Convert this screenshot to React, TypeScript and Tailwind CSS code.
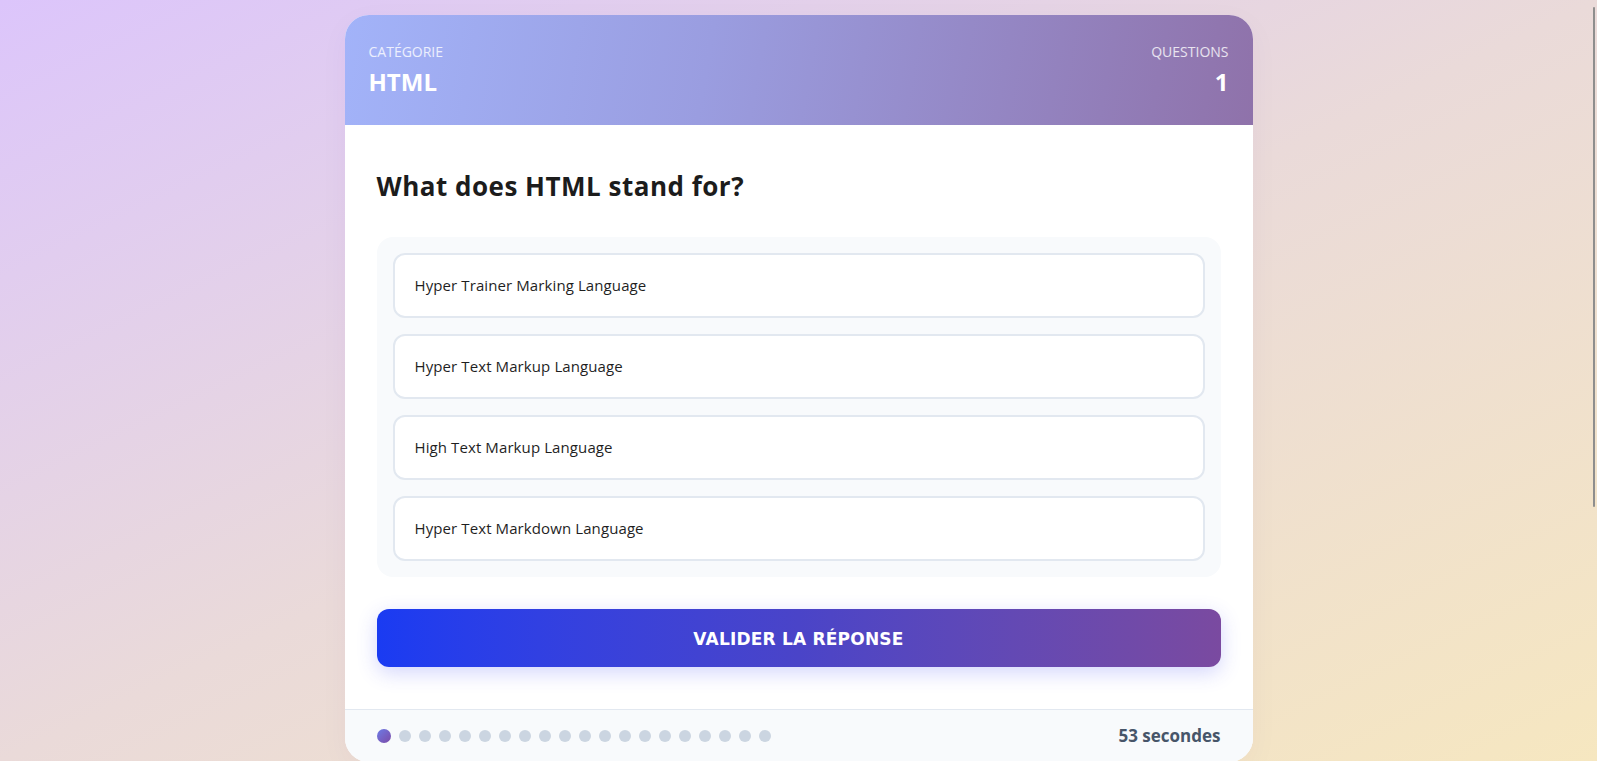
const options = [
  "Hyper Trainer Marking Language",
  "Hyper Text Markup Language",
  "High Text Markup Language",
  "Hyper Text Markdown Language",
];

const TOTAL = 20;

export default function App() {
  return (
    <div
      className="relative h-[761px] overflow-hidden bg-gradient-to-br from-[#dcc5fb] via-[#eadad9] to-[#f6e7c0] pt-[15px]"
      style={{ fontFamily: '"Open Sans", "Noto Sans", sans-serif' }}
    >
      <div className="mx-auto w-[908px] overflow-hidden rounded-3xl bg-white shadow-[0_8px_30px_rgba(80,60,120,0.04)]">
        {/* Header */}
        <div className="flex h-[110px] items-start justify-between bg-[linear-gradient(100deg,#a2b3f9_0%,#9a9de0_40%,#8f72aa_100%)] px-6 pt-[27px]">
          <div>
            <div className="text-[14px] leading-5 uppercase text-white/80">Catégorie</div>
            <div className="mt-1 text-2xl leading-8 font-bold text-white">HTML</div>
          </div>
          <div className="text-right">
            <div className="text-[14px] leading-5 uppercase text-white/80">Questions</div>
            <div className="mt-1 text-2xl leading-8 font-bold text-white">1</div>
          </div>
        </div>

        {/* Body */}
        <div className="px-8 pt-[44px] pb-[42px]">
          <h2 className="text-[26px] leading-[34px] font-bold tracking-[0.5px] text-[#1c1c1c]">
            What does HTML stand for?
          </h2>

          <div className="mt-[34px] flex flex-col gap-4 rounded-2xl bg-[#f8fafc] p-4">
            {options.map((o) => (
              <button
                key={o}
                className="flex h-[65px] items-center rounded-xl border-2 border-[#e2e8f0] bg-white px-5 text-left text-[15px] tracking-[0.1px] text-[#1f1f1f]"
              >
                {o}
              </button>
            ))}
          </div>

          <button
            className="mt-8 flex h-[58px] w-full items-center justify-center rounded-xl bg-gradient-to-r from-[#1a3bf2] via-[#4a44c8] to-[#7a4aa0] pt-1 text-[17px] font-bold tracking-[0.2px] text-white shadow-[0_6px_20px_rgba(60,70,240,0.22)]"
            style={{ fontFamily: '"DejaVu Sans", Verdana, sans-serif' }}
          >
            VALIDER LA RÉPONSE
          </button>
        </div>

        {/* Footer */}
        <div className="flex items-center justify-between border-t border-[#e2e8f0] bg-[#f8fafc] px-8 py-4">
          <div className="flex items-center gap-2">
            {Array.from({ length: TOTAL }).map((_, i) =>
              i === 0 ? (
                <span
                  key={i}
                  className="h-[14px] w-[14px] rounded-full bg-gradient-to-br from-[#6a7be6] to-[#7a4aa8]"
                />
              ) : (
                <span key={i} className="h-3 w-3 rounded-full bg-[#cbd5e1]" />
              )
            )}
          </div>
          <div className="text-[17px] leading-5 font-bold text-[#475569]">53 secondes</div>
        </div>
      </div>

      {/* overlay scrollbar thumb */}
      <div className="absolute right-[2px] top-[7px] h-[500px] w-[2px] rounded-full bg-[#8e8e8e]" />
    </div>
  );
}
